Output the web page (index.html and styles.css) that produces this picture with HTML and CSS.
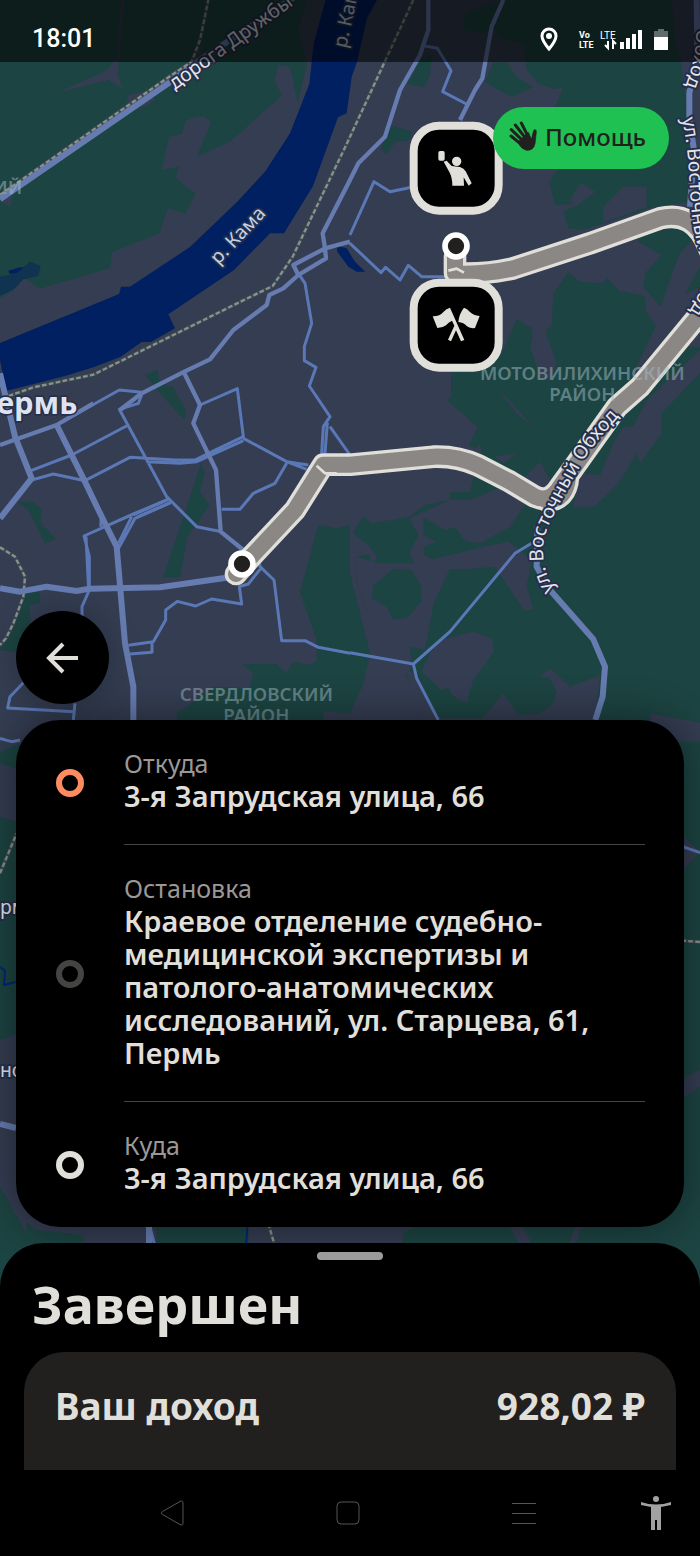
FILE: index.html
```html
<!DOCTYPE html>
<html lang="ru">
<head>
<meta charset="utf-8">
<meta name="viewport" content="width=device-width, initial-scale=1">
<title>Завершен</title>
<link rel="stylesheet" href="styles.css">
</head>
<body>
<div class="screen">

<svg class="map" viewBox="0 0 2100 4668" preserveAspectRatio="xMidYMin slice" aria-hidden="true">
 <defs>
  <path id="druzhby" d="M524 271 L880 15"/>
  <path id="kama1" d="M655 796 L865 574"/>
  <path id="kama2" d="M1038 146 Q1058 60 1082 -60"/>
  <path id="obhod1" d="M1664 1768 C1618 1700 1622 1620 1650 1568 C1680 1505 1700 1470 1740 1400 C1765 1350 1810 1300 1920 1180"/>
  <path id="obhod2" d="M2106 -300 L2088 130 Q2082 190 2056 258"/>
  <path id="obhod3" d="M2046 356 C2056 400 2062 450 2066 500 C2072 600 2074 680 2095 740 C2120 800 2115 860 2070 930"/>
 </defs>

 <!-- parks -->
 <g class="park">
  <path d="M0 0H920L895 90L920 195L893 308L870 200L835 195L824 240L845 287L690 425L590 470L634 365L610 347L558 360L545 402L508 410L484 510L538 500L525 532L587 582L556 643L504 624L478 700L336 757L330 804L118 866L60 825L40 872L0 895Z"/>
  <g transform="translate(1050 0)">
   <path d="M345 40L455 0H975L1000 130L1010 300L1040 560V600L900 625L700 690L655 685L640 635L690 610L615 615L598 545L625 507H760L620 380L615 320L640 262L610 268L565 250L530 210L520 125L455 120L430 80L400 100L340 90Z"/>
   <path d="M185 230L210 180L245 165L240 225L222 262L172 252ZM430 187H470L500 230L548 262L487 290L455 275L405 245ZM120 375L185 395L180 420L135 425L110 462L92 448Z"/>
  </g>
  <g transform="translate(1050 600)">
   <path d="M303 515L455 460L500 357L545 385L550 468L600 470L575 395L605 380L610 280L655 217L690 245L755 250L772 234L808 272L885 288L888 335L918 378L860 500L960 440L1050 440V800H430L405 705L380 745L357 735L385 680L290 600L303 590Z"/>
   <path d="M860 110L1050 60V260L932 320L880 260L885 220L935 165L865 125Z"/>
  </g>
  <g transform="translate(1050 1260)">
   <path d="M355 0H1050V1100H740L600 900H505L460 822L395 895H230L165 760L190 740L175 670L50 570L20 490V410L55 403L67 430L82 415L60 380L10 340L20 318L42 290L65 310L175 292L225 255L300 240V215H360L370 170L400 120L380 15Z"/>
   <path d="M0 460L-100 405L-100 870L0 880L40 790L60 700Z"/>
  </g>
  <g transform="translate(0 810)">
   <path d="M435 315L472 300L480 340L518 350L558 420L553 450L480 370ZM603 580L614 610L600 665L628 705L595 755L562 800L540 922H490Z"/>
  </g>
  <g transform="translate(0 1440)">
   <path d="M50 65H98L124 88L122 130L168 178L135 190L85 90ZM75 335H118L120 370L88 375L92 440L60 520L0 510ZM955 135L1010 145L1050 135V515L948 475L900 335ZM728 552H830L858 578L880 545L930 555L965 532L998 560L1000 620L970 650V1000H560L530 700L560 680L640 620L748 625L760 580Z"/>
  </g>
  <path d="M0 2255L60 2232V2310L0 2290ZM0 2450L100 2480V3350L0 3320ZM0 3360L40 3640L110 3690L250 3705V4000H0ZM470 3600H745V3780H470Z"/>
  <path d="M1380 3600H2100V3800H1200L1210 3700ZM1980 2100H2100V3900H1980Z"/>
 </g>

 <!-- open ground inside the parks -->
 <g class="ground">
  <path d="M375 0L358 175L352 222L368 266L325 240L165 280L320 212L350 170L362 0ZM385 285L440 272L465 300L430 322L380 318ZM0 600L38 588L30 622ZM570 180L590 140L605 150L600 190Z"/>
  <g transform="translate(1050 0)">
   <path d="M692 548L736 575L675 622L660 600ZM760 620L820 560H890V622L758 668ZM965 0H1050V280L1010 310L995 200L975 120Z"/>
  </g>
  <g transform="translate(1050 600)">
   <path d="M988 160L1050 100V200L1000 290L860 560L830 590L860 500L918 378L940 300ZM560 380L580 375L620 490L600 540L570 530L540 440ZM430 550L560 690L500 640ZM890 600L1050 450V520L935 640V700L870 790L840 700ZM960 250L1020 290L990 340L950 300Z"/>
  </g>
  <g transform="translate(1050 1260)">
   <path d="M820 20H935V40L870 85L805 190L733 260H670L690 160L750 165L790 70ZM435 110L500 100L460 130ZM570 125L620 215L520 260L480 320L390 370L345 362L315 322L285 330L220 293V345L258 365L222 380L220 402L250 420L252 450L212 467L178 400L205 345L178 295L300 240H360L520 175ZM360 447H300L252 545L225 690L180 680L170 600L215 540L212 495L185 450L130 447L70 495L65 535L110 560L130 600L180 590V680L50 570L20 490V410L82 430L200 430L400 380L475 365L520 400L435 440ZM475 365L545 420L530 500L550 567L523 572L435 440ZM270 660L370 635L425 655L432 695L370 780L350 850L305 825L295 800L275 812L215 755L240 700ZM568 770L600 745L660 800L750 765L735 900H395L460 822L505 885L570 880L610 850L620 815L600 775ZM165 750L200 760L265 900H220Z"/>
  </g>
  <path d="M1950 2140L2100 2168V2225H1955ZM2040 2500L2100 2556L2050 2610ZM2040 3240L2100 3210V3260L2040 3300ZM1530 3680H1570L1600 3740H1560ZM1725 3680H1745L1725 3740H1705ZM0 3120L80 3090V3700L0 3560Z"/>
 </g>

 <!-- water -->
 <g class="water">
  <path d="M977 0L941 130L928 252L870 400L795 515L711 606L570 741L390 860H363L357 882L0 1029V1080L18 1173L195 1128L285 1100L362 1070L425 1026H452L525 985L505 943L702 810L810 700H852L939 558L1014 352L1040 340L1055 230L1071 186L1101 54L1131 0Z"/>
  <path d="M1010 738L1040 745L1065 785L1096 815H1070L1045 800L1012 755ZM25 812L60 802H88L84 815L30 822Z"/>
 </g>
 <path class="pond" d="M0 830L50 820L90 785L122 797L115 828L70 838L45 865L0 888Z"/>
 <path class="stream" d="M0 2900L15 2912L12 2955L60 2943M743 3670L738 3740"/>

 <!-- railways -->
 <g class="rail">
  <path d="M0 585L505 232L575 185L600 120L625 0"/>
  <path d="M1240 0L1040 432L878 770L818 858L738 897L280 1124L100 1162L20 1190M0 1642L45 1670L75 1730L70 1790L40 1870L18 1915L0 1935M805 3670L825 3740M1960 2815L2100 2826M0 2620L50 2500"/>
 </g>
 <g class="rail-dash">
  <path d="M0 585L505 232L575 185L600 120L625 0"/>
  <path d="M1240 0L1040 432L878 770L818 858L738 897L280 1124L100 1162L20 1190M0 1642L45 1670L75 1730L70 1790L40 1870L18 1915L0 1935M805 3670L825 3740M1960 2815L2100 2826M0 2620L50 2500"/>
 </g>

 <!-- streets -->
 <g class="street">
  <g transform="translate(1050 0)">
   <path d="M225 138L262 145L303 212L278 275L355 315M0 705L72 545L120 575L185 562M0 730L93 818L107 802L150 840L175 796L215 830H300"/>
  </g>
  <g transform="translate(0 810)">
   <path d="M895 10L915 40L935 160L913 230V272L948 292L928 348L990 440L970 470L965 550M982 458L975 550M990 470L1050 555M425 367L358 360L170 465M425 375L415 400L358 418L500 680L590 770L665 785M600 405L712 356L730 500L625 550L585 570H525L390 562L255 632L160 612L95 630M730 512L590 575L540 580L440 575M730 505L860 575L925 585M860 580L825 640L760 670L720 718H665M860 575L920 598M385 465L215 555L85 605M505 688L400 735M510 698L410 742"/>
  </g>
  <g transform="translate(0 1440)">
   <path d="M500 60L400 102L252 168L268 230V330L246 380V410M512 68L405 115L350 215M395 110L355 190M258 170L266 330M305 95L302 140M770 200L780 260L822 300L845 482H915L955 502L1050 520M785 262L745 312L718 320L725 372L635 357L587 378L532 364L497 390V420L460 485L385 496M456 485V517L390 522M70 608L30 650L23 684L220 695M225 670L220 720"/>
  </g>
  <g transform="translate(1050 1260)">
   <path d="M0 698L190 732L300 635L495 400L545 370M190 732L200 775L265 900"/>
  </g>
  <path d="M0 2215L35 2225L60 2220M1960 2510L2100 2558M450 3680L465 3740"/>
 </g>
 <g class="road">
  <path d="M1285 0V90L1260 165L1200 270L1155 410L1075 490L1045 550L968 700L975 745L880 795L895 825L978 775L975 745L1050 725"/>
  <path d="M1510 0L1475 80L1447 235L1425 270L1380 360"/>
  <path d="M895 825L850 865L808 885L800 915L700 990L630 1078L553 1115L425 1180"/>
  <path d="M553 1120L600 1215L580 1270L648 1410L662 1595L730 1650"/>
  <path d="M0 1335L170 1275L280 1210M425 1180L360 1230"/>
 </g>
 <g class="road road-wide">
  <path d="M0 598L505 250L600 180L900 -20"/>
  <path d="M0 1120L45 1310L95 1435L0 1555M170 1275L250 1435L300 1540L350 1640L375 1930L400 2060V2160"/>
  <path d="M0 1765L60 1775L140 1760L230 1773L270 1766L480 1762L690 1732M0 3372L48 3384M447 3680V3740"/>
  <path d="M2090 0L2092 150L2068 280V360L2082 450L2070 620M1612 1580L1610 1700L1650 1770L1780 1918L1815 2000L1808 2090L1786 2160"/>
 </g>

 <!-- driven route -->
 <g class="route-edge">
  <path d="M708 1722L750 1674L885 1530L970 1394L1050 1394L1300 1370Q1370 1367 1435 1396L1530 1445L1605 1490Q1650 1510 1680 1460L1716 1410L1850 1222L1920 1160L2100 942Q2180 850 2125 740Q2080 630 1980 655L1770 730L1540 805Q1450 825 1365 820V770"/>
  <path d="M1640 1502Q1700 1500 1704 1430"/>
 </g>
 <g class="route">
  <path d="M708 1722L750 1674L885 1530L970 1394L1050 1394L1300 1370Q1370 1367 1435 1396L1530 1445L1605 1490Q1650 1510 1680 1460L1716 1410L1850 1222L1920 1160L2100 942Q2180 850 2125 740Q2080 630 1980 655L1770 730L1540 805Q1450 825 1365 820V770"/>
  <path d="M1640 1502Q1700 1500 1704 1430"/>
 </g>
 <path class="route-seam" d="M950 1397L975 1420H1010M1345 812L1370 806L1392 818"/>

 <!-- district names -->
 <g class="district">
  <text x="1747" y="1140" text-anchor="middle">МОТОВИЛИХИНСКИЙ</text>
  <text x="1747" y="1203" text-anchor="middle">РАЙОН</text>
  <text x="769" y="2104" text-anchor="middle">СВЕРДЛОВСКИЙ</text>
  <text x="769" y="2167" text-anchor="middle">РАЙОН</text>
  <text x="67" y="583" text-anchor="end">ИЙ</text>
 </g>

 <!-- street and river names -->
 <g class="name">
  <text><textPath href="#druzhby">дорога Дружбы</textPath></text>
  <text class="river"><textPath href="#kama1">р. Кама</textPath></text>
  <text class="river"><textPath href="#kama2">р. Кама</textPath></text>
  <text><textPath href="#obhod1">ул. Восточный Обход</textPath></text>
  <text text-anchor="end"><textPath href="#obhod2" startOffset="100%">Обход</textPath></text>
  <text><textPath href="#obhod3">ул. Восточный Обход</textPath></text>
  <text x="0" y="2742">рм</text>
  <text x="0" y="3230">но</text>
 </g>
 <text class="city" x="232" y="1243" text-anchor="end">Пермь</text>

 <!-- route ends -->
 <g class="pin">
  <circle cx="726" cy="1692" r="33"/>
  <circle cx="1368" cy="738" r="33"/>
 </g>
 <g class="marker">
  <rect x="1241" y="377" width="255" height="255" rx="76"/>
  <rect x="1241" y="848" width="255" height="255" rx="76"/>
 </g>
 <g class="marker-icon">
  <g transform="translate(1050 0)">
   <rect x="265" y="453" width="19" height="29" rx="5"/>
   <circle cx="320" cy="484" r="14"/>
   <path d="M281 485L290 482L305 498L330 501Q342 505 347 514L365 550L356 557L341 532L342 557H307Q307 532 298 516Z"/>
  </g>
  <g transform="translate(1050 600)">
   <path d="M248 349Q268 350 280 336Q289 325 300 323L343 420L333 424L318 391L303 424L294 419L313 377L306 362Q297 366 288 376Q278 384 262 384ZM342 323Q351 325 360 336Q370 346 389 348L375 384Q358 386 350 378Q342 368 325 366Q327 342 342 323Z"/>
  </g>
 </g>
</svg>

<header class="status">
 <span class="clock">18:01</span>
 <svg class="status-icons" width="130" height="28" viewBox="0 0 130 28" aria-hidden="true">
  <path class="line" d="M11 24C6 18 4 14 4 11A7 7 0 0 1 18 11C18 14 16 18 11 24Z"/>
  <circle cx="11" cy="11" r="3"/>
  <text class="tiny bold" x="41" y="13">Vo</text>
  <text class="tiny bold" x="41" y="23">LTE</text>
  <text class="tiny" x="62" y="14">LTE</text>
  <path class="thin" d="M70 16V23L67 20M75 24V16L78 19"/>
  <path d="M82 17h4v7h-4zM88 13h4v11h-4zM94 9h4v15h-4zM100 5h4v19h-4z"/>
  <path class="dim" d="M116 6h4V4h6v2h4v6h-14z"/>
  <path d="M116 12h14v13h-14z"/>
 </svg>
</header>

<button class="help" type="button">
 <svg width="28" height="30" viewBox="478 368 84 90" aria-hidden="true">
  <path d="M484 413L512 436M485 394L516 424M497 380L524 415M515 374L534 412"/>
  <path class="palm" d="M504 432L536 402L542 415L546 422Q550 398 554 394Q561 393 560 401L556 436Q552 457 530 456Q514 452 504 432Z"/>
 </svg>
 Помощь
</button>

<button class="back" type="button" aria-label="Назад">
 <svg width="34" height="34" viewBox="0 0 34 34" aria-hidden="true"><path d="M32 17H3M17 3L3 17L17 31"/></svg>
</button>

<ul class="stops">
 <li class="stop from">
  <div class="stop-text"><span class="label">Откуда</span><span class="address">3-я Запрудская улица, 66</span></div>
 </li>
 <li class="stop via">
  <div class="stop-text"><span class="label">Остановка</span><span class="address">Краевое отделение судебно-медицинской экспертизы и патолого-анатомических исследований, ул. Старцева, 61, Пермь</span></div>
 </li>
 <li class="stop to">
  <div class="stop-text"><span class="label">Куда</span><span class="address">3-я Запрудская улица, 66</span></div>
 </li>
</ul>

<section class="sheet">
 <div class="handle"></div>
 <h1>Завершен</h1>
 <div class="income"><span>Ваш доход</span><span>928,02 ₽</span></div>
</section>

<nav class="keys">
 <button type="button" aria-label="Назад"><svg width="24" height="26" viewBox="0 0 24 26"><path d="M20 1.500Q23 0 23 3V23Q23 26 20 24.500L2.500 14.500Q0 13 2.500 11.500Z"/></svg></button>
 <button type="button" aria-label="Домой"><svg width="24" height="24" viewBox="0 0 24 24"><rect x="1" y="1" width="22" height="22" rx="4"/></svg></button>
 <button type="button" aria-label="Меню"><svg width="24" height="24" viewBox="0 0 24 24"><path d="M0 2.500H24M0 12.500H24M0 22.500H24"/></svg></button>
 <button type="button" aria-label="Специальные возможности"><svg class="person" width="32" height="36" viewBox="0 0 32 36"><circle cx="16" cy="4" r="3"/><path d="M1 7Q16 12 31 7V10L21 12V35H17V25H15V35H11V12L1 10Z"/></svg></button>
</nav>

</div>
</body>
</html>
```

FILE: styles.css
```css
*, *::before {
 box-sizing: border-box;
}
body {
 margin: 0;
 background: #000;
 color: #e0dfda;
 font-family: "Noto Sans", "Open Sans", sans-serif;
}
button {
 border: 0;
 padding: 0;
 font: inherit;
 cursor: pointer;
}
.screen {
 position: relative;
 display: flex;
 flex-direction: column;
 min-height: 100vh;
 overflow: hidden;
}

/* map */
.map {
 position: absolute;
 top: 0;
 left: 0;
 z-index: -1;
 width: 100%;
 height: 100%;
 background: #343d52;
 stroke-linejoin: round;
}
.park { fill: #1c4442; }
.ground { fill: #343d52; }
.water { fill: #002062; }
.pond { fill: #0f3350; }
.stream { fill: none; stroke: #00277a; stroke-width: 6; }
.rail { fill: none; stroke: #3d4850; stroke-width: 11; }
.rail-dash { fill: none; stroke: #87928f; stroke-width: 7; stroke-dasharray: 14 7; }
.street { fill: none; stroke: #5b78b6; stroke-width: 9; }
.road { fill: none; stroke: #667bb0; stroke-width: 13; }
.road-wide { stroke-width: 18; }
.route-edge { fill: none; stroke: #e0dfda; stroke-width: 68; stroke-linecap: round; }
.route { fill: none; stroke: #8b8784; stroke-width: 48; stroke-linecap: round; }
.route-seam { fill: none; stroke: #e0dfda; stroke-width: 8; }
.district {
 fill: #a3bcc4;
 fill-opacity: .5;
 font-size: 56px;
 font-weight: 600;
}
.name {
 fill: #e4e6ea;
 stroke: #262f4c;
 stroke-width: 12;
 paint-order: stroke;
 font-size: 58px;
}
.river { fill: #c9d0df; stroke: #1d2f55; }
.city {
 fill: #dfe3ef;
 stroke: #262f4c;
 stroke-width: 10;
 paint-order: stroke;
 font-size: 92px;
 font-weight: 700;
}
.pin { fill: #21201f; stroke: #fff; stroke-width: 17; }
.marker { fill: #000; stroke: #e0dfda; stroke-width: 24; }
.marker-icon { fill: #e0dfda; }

/* status bar */
.status {
 display: flex;
 align-items: center;
 justify-content: space-between;
 height: 62px;
 padding: 16px 32px 0;
 background: rgba(0, 0, 0, .57);
 color: #fff;
}
.clock {
 font: 500 25px/30px Roboto, sans-serif;
}
.status-icons { overflow: visible; fill: #fff; }
.status-icons .line { fill: none; stroke: #fff; stroke-width: 3; }
.status-icons .thin { fill: none; stroke: #fff; stroke-width: 2; }
.status-icons .dim { opacity: .35; }
.tiny { font: 10px Roboto, sans-serif; }
.bold { font-size: 9px; font-weight: 700; }

/* floating buttons */
.help {
 display: flex;
 align-items: center;
 align-self: flex-end;
 gap: 8px;
 height: 62px;
 margin: 45px 31px 0 0;
 padding: 0 23px 4px 16px;
 border-radius: 31px;
 background: #1fc152;
 color: #21201f;
 font-size: 24px;
 font-weight: 500;
}
.help path {
 fill: none;
 stroke: #21201f;
 stroke-width: 9;
 stroke-linecap: round;
}
.help .palm { fill: #21201f; stroke-width: 2; }
.back {
 display: grid;
 place-items: center;
 width: 93px;
 height: 93px;
 margin: auto 0 16px 16px;
 border-radius: 50%;
 background: #000;
 box-shadow: 0 0 32px rgba(0, 0, 0, .25);
}
.back path {
 fill: none;
 stroke: #e0dfda;
 stroke-width: 4;
}

/* stops */
.stops {
 margin: 0 16px 16px;
 padding: 0 39px 0 40px;
 border-radius: 44px;
 background: #000;
 box-shadow: 0 0 40px rgba(0, 0, 0, .45);
 list-style: none;
}
.stop {
 display: flex;
 align-items: center;
 gap: 40px;
}
.stop::before {
 content: "";
 flex: none;
 width: 28px;
 height: 28px;
 border: 6px solid #e0dfda;
 border-radius: 50%;
}
.from::before { border-color: #ff8c61; }
.via::before { border-color: #454443; }
.stop-text {
 flex: 1;
 padding: 27px 0 32px;
 border-bottom: 1px solid #454443;
}
.to .stop-text { border-bottom-color: transparent; }
.label, .address { display: block; }
.label {
 color: #9b9895;
 font-size: 25px;
 line-height: 32px;
}
.address {
 font-size: 29px;
 font-weight: 600;
 line-height: 33px;
}

/* order sheet */
.sheet {
 padding: 9px 24px 0;
 border-radius: 44px 44px 0 0;
 background: #000;
}
.handle {
 width: 66px;
 height: 8px;
 margin: 0 auto;
 border-radius: 4px;
 background: #9b9b9b;
}
h1 {
 margin: 10px 8px 14px;
 font-size: 52px;
 font-weight: 700;
 line-height: 68px;
}
.income {
 display: flex;
 justify-content: space-between;
 height: 118px;
 padding: 28px 31px;
 border-radius: 40px 40px 0 0;
 background: #21201f;
 font-size: 37px;
 font-weight: 700;
 line-height: 52px;
}

/* system keys */
.keys {
 display: grid;
 grid-template-columns: 2fr 2fr 2fr 1fr;
 height: 86px;
 padding-left: 12%;
 background: #000;
}
.keys button {
 display: grid;
 place-items: center;
 background: none;
}
.keys svg { fill: none; stroke: #555; }
.keys .person { fill: #a2a2a2; stroke: none; }
```
